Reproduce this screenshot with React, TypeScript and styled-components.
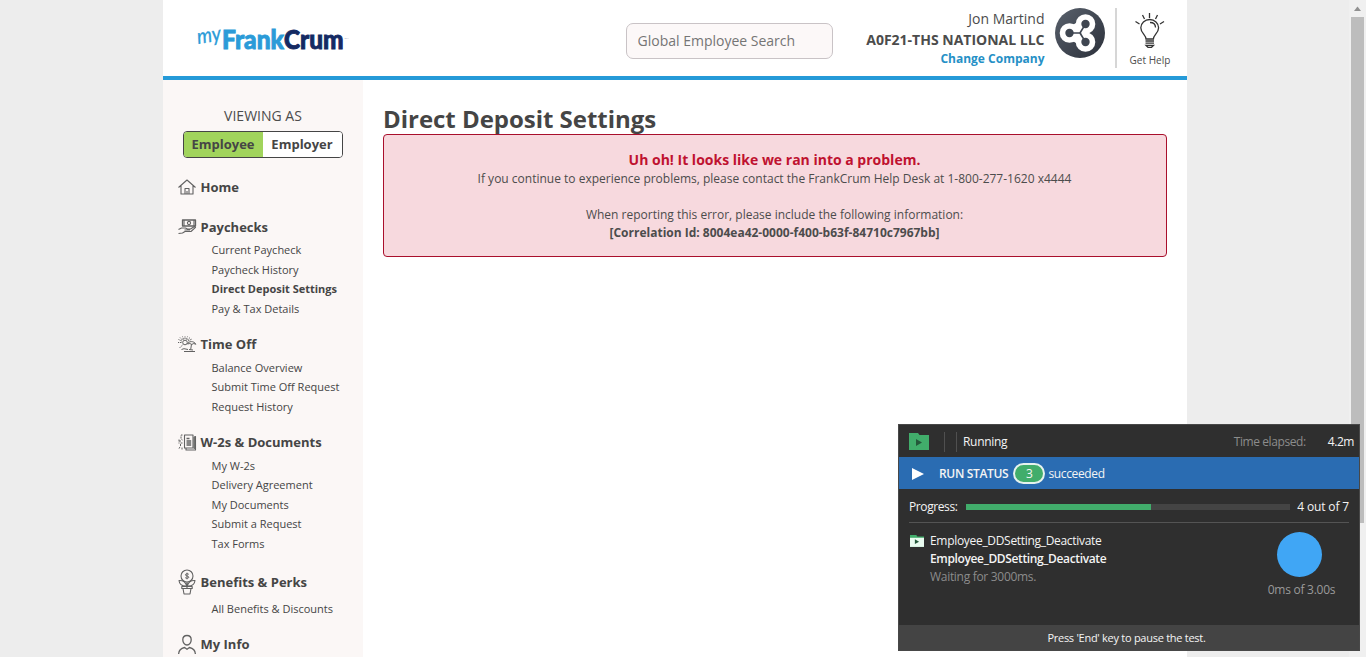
import React from "react";
import styled, { createGlobalStyle } from "styled-components";

const GlobalStyle = createGlobalStyle`
  *, *::before, *::after { box-sizing: border-box; }
  html, body { margin: 0; height: 657px; overflow: hidden; }
  body {
    background: #ededed;
    color: #4c4c4c;
    font-family: "Open Sans", "Noto Sans", sans-serif;
    font-size: 12px;
  }
`;

const Screen = styled.div`
  position: relative;
  display: flex;
  justify-content: space-between;
  width: 1366px;
  height: 657px;
  overflow: hidden;
  padding-left: 163px;
`;

const Page = styled.div`
  display: flex;
  flex-direction: column;
  width: 1024px;
  height: 657px;
  background: #fff;
`;

const Header = styled.header`
  display: flex;
  align-items: flex-start;
  flex: none;
  height: 80px;
  padding-left: 35px;
  border-bottom: 4px solid #259ad8;
`;

const Logo = styled.svg`
  flex: none;
  width: 152px;
  height: 40px;
  margin-top: 20px;
  overflow: visible;
`;

const Search = styled.input`
  flex: none;
  width: 207px;
  height: 36px;
  margin: 23px 0 0 276px;
  padding: 0 10px 2px 10.5px;
  border: 1px solid #c9c3c6;
  border-radius: 7px;
  background: #fcf8f8;
  color: #757575;
  font: 14px "Open Sans", sans-serif;
  outline: none;
  &::placeholder { color: #757575; opacity: 1; }
`;

const User = styled.div`
  display: flex;
  flex-direction: column;
  align-items: flex-end;
  flex: none;
  width: 211.5px;
  padding-top: 9px;
`;

const Line = styled.span<{ $size?: number; $height?: number; $weight?: number; $color?: string; $track?: number }>`
  font-size: ${(p) => p.$size ?? 12}px;
  line-height: ${(p) => p.$height ?? 18}px;
  font-weight: ${(p) => p.$weight ?? 400};
  color: ${(p) => p.$color ?? "inherit"};
  letter-spacing: ${(p) => p.$track ?? 0}px;
  white-space: pre;
`;

const Avatar = styled.svg`
  flex: none;
  width: 50px;
  height: 50px;
  margin: 8px 10px 0 10.5px;
`;

const Help = styled.div`
  display: flex;
  flex-direction: column;
  align-items: center;
  width: 68px;
  height: 60px;
  margin-top: 8px;
  border-left: 2px solid #d6d6d6;
`;

const Bulb = styled.svg`
  width: 34px;
  height: 38px;
  margin: 3px 0 3px;
`;

const Body = styled.div`
  display: flex;
  flex: 1;
`;

const Sidebar = styled.nav`
  width: 200px;
  height: 577px;
  overflow: hidden;
  background: #fbf7f6;
`;

const ViewingAs = styled.div`
  display: flex;
  flex-direction: column;
  align-items: center;
  height: 97px;
  padding-top: 26px;
`;

const Toggle = styled.div`
  display: flex;
  width: 160px;
  height: 27px;
  margin-top: 6px;
  border: 1px solid #454545;
  border-radius: 4px;
  overflow: hidden;
`;

const Choice = styled.button<{ $on?: boolean }>`
  flex: 1;
  padding: 0 1px 0 0;
  border: 0;
  background: ${(p) => (p.$on ? "#a1d45c" : "#fff")};
  color: #454545;
  font: 700 13px/25px "Open Sans", sans-serif;
`;

const Group = styled.section<{ $gap?: number }>`
  margin-bottom: ${(p) => p.$gap ?? 15.5}px;
`;

const GroupHead = styled.div<{ $tall?: boolean }>`
  display: flex;
  align-items: center;
  gap: 4.5px;
  height: ${(p) => (p.$tall ? 26 : 20)}px;
  padding-left: 15px;
  color: #454545;
  font-size: 13px;
  font-weight: 700;
  white-space: nowrap;
`;

const NavIcon = styled.svg`
  flex: none;
  width: 18px;
  height: 26px;
  overflow: visible;
  fill: none;
  stroke: #626262;
  stroke-width: 1.1;
  stroke-linejoin: round;
`;

const Items = styled.ul`
  margin: 3.5px 0 0;
  padding: 0 0 0.5px 48.5px;
  list-style: none;
`;

const Item = styled.li<{ $active?: boolean }>`
  height: 19.5px;
  color: #454545;
  font-size: 11px;
  line-height: 19px;
  font-weight: ${(p) => (p.$active ? 700 : 400)};
  white-space: nowrap;
`;

const Main = styled.main`
  flex: 1;
  padding: 24px 20px 0;
`;

const Title = styled.h1`
  margin: 0;
  height: 30px;
  color: #454545;
  font-size: 24px;
  line-height: 30px;
  font-weight: 700;
  letter-spacing: -0.03px;
`;

const Alert = styled.div`
  display: flex;
  flex-direction: column;
  align-items: center;
  height: 123px;
  padding: 15px 1px 0 0;
  border: 1px solid #a90f2c;
  border-radius: 4px;
  background: #f7d9de;
`;

const ScrollTrack = styled.div`
  display: flex;
  flex-direction: column;
  align-items: center;
  width: 17px;
  height: 657px;
  background: #f0f0f0;
`;

const ScrollArrow = styled.svg`
  width: 9px;
  height: 17px;
`;

const ScrollThumb = styled.div`
  width: 13px;
  height: 506px;
  background: #bdbdbd;
`;

const Runner = styled.aside`
  position: absolute;
  left: 898px;
  top: 424px;
  display: flex;
  flex-direction: column;
  width: 462px;
  height: 227px;
  border: 1px solid #484848;
  background: #2f2f2f;
  color: #f4f4f4;
`;

const RunnerBar = styled.div`
  display: flex;
  align-items: center;
  flex: none;
  height: 32px;
  padding: 1px 5px 0 10px;
`;

const Ticks = styled.div`
  width: 13px;
  height: 20px;
  margin: 0 6px 0 15px;
  border: solid #505050;
  border-width: 0 1px;
`;

const Elapsed = styled.div`
  display: flex;
  gap: 22px;
  margin-left: auto;
`;

const StatusBar = styled(RunnerBar)`
  padding-left: 13px;
  background: #2a6cb2;
`;

const PlayMark = styled.svg`
  width: 12px;
  height: 12px;
  margin-right: 15px;
`;

const Count = styled.span`
  display: flex;
  align-items: center;
  justify-content: center;
  width: 32px;
  height: 21px;
  margin: -1px 3px 0 5px;
  padding-top: 1px;
  border: 2px solid #e6f2ee;
  border-radius: 11px;
  background: #41ad6b;
`;

const ProgressRow = styled.div`
  display: flex;
  align-items: center;
  justify-content: space-between;
  height: 34px;
  margin: 0 10px;
  padding-top: 2px;
  border-bottom: 1px solid #545454;
`;

const Meter = styled.div`
  width: 324px;
  height: 6px;
  margin: 0 7px 0 8px;
  background: #444;
`;

const MeterFill = styled.div`
  width: 57.1%;
  height: 100%;
  background: #41ad6b;
`;

const RunnerBody = styled.div`
  display: flex;
  flex: 1;
  padding: 9px 23.500px 0 11px;
`;

const StepMark = styled.div`
  padding-top: 2px;
`;

const Steps = styled.div`
  display: flex;
  flex-direction: column;
  margin-left: 6px;
`;

const Timer = styled.div`
  display: flex;
  flex-direction: column;
  align-items: center;
  width: 68px;
  margin-left: auto;
`;

const Disc = styled.div`
  width: 45px;
  height: 45px;
  margin: 0 5px 4px 0;
  border-radius: 50%;
  background: #40a6f5;
`;

const RunnerFoot = styled.div`
  display: flex;
  align-items: center;
  justify-content: center;
  flex: none;
  height: 25px;
  padding-right: 5px;
  background: #444;
`;

const HomeIcon = () => (
  <NavIcon viewBox="0 0 18 26">
    <path d="M.5 13.500 9 6l8.500 7.500M3 11.500V20h12v-8.500M7 20v-5.500h4V20M9 17v3" />
  </NavIcon>
);

const PayIcon = () => (
  <NavIcon viewBox="0 0 18 26">
    <rect x="4.500" y="6" width="13" height="6" strokeWidth="1.300" />
    <circle cx="11" cy="9" r="1.600" />
    <path d="M6 6v6M16 6v6M.5 15.500l3-1.500h4l2 1h3l4-2.500 1 .8-4.500 4.200H7L4.500 19l-4 .5M6.500 16H12" />
  </NavIcon>
);

const BeachIcon = () => (
  <NavIcon viewBox="0 0 18 26">
    <circle cx="7" cy="11.500" r="2.300" strokeWidth="1" />
    <path
      strokeWidth="1"
      strokeDasharray="1.600 .8"
      d="M7 8V5M4.500 9 2 6.500M9.500 9 12 6.500M3.500 11.500H0M4.500 14 1.500 17M10 10l4-2M3.800 10 .5 8.500M5.500 8.500 4.500 5.500M8.500 8.500l1-3"
    />
    <path strokeWidth="1" d="M9.500 13c1-3 6.500-3.500 8.300.3l-2-.8-2 .9-2-.9zM13.500 13.200l-.8 5.300M3.500 18.500l2.500-.8 4 .8M6 20.500h11M11 18.500l4 .5" />
  </NavIcon>
);

const DocIcon = () => (
  <NavIcon viewBox="0 0 18 26">
    <path d="M6.500 6h8.500v13H6.500zM16.300 7.500h1.200V21H8v-1.500M16.300 8v12" />
    <path strokeWidth="1.300" d="M8.500 9.500h3M8.500 12h4.700M8.500 14h4.700M8.500 16h4.700" />
    <path strokeWidth="1" strokeDasharray="2 1" d="M4.500 6H3v4l1.500 1M3 12H.8M4.500 14H2.500v3L.8 20M4 18.500v2M1 10.500v4" />
  </NavIcon>
);

const PlantIcon = () => (
  <NavIcon viewBox="0 0 18 26">
    <circle cx="9" cy="7" r="6" />
    <path
      strokeWidth="1"
      d="M10.800 5.300C9.800 4.400 7.400 4.600 7.400 5.900c0 1.400 3.400.8 3.400 2.300 0 1.300-2.400 1.400-3.600.5M9 3.700v6.600"
    />
    <path d="M1 11.500c3-.2 6.500 1 7.800 5.500-4 .3-7.300-1-7.800-5.500zM17 11.500c-3-.2-6.500 1-7.800 5.500 4 .3 7.300-1 7.800-5.500zM9 13v6M3.800 17.500h10.400v2H3.800zM5 19.500l1 5.500h6l1-5.500" />
  </NavIcon>
);

const PersonIcon = () => (
  <NavIcon viewBox="0 0 18 26">
    <path
      strokeWidth="1.300"
      d="M9 4.500c2.700 0 4.200 1.700 4.200 4.300S11.500 14 9 14s-4.200-2.600-4.200-5.200S6.300 4.500 9 4.500zM.6 23c.2-4 2-5.700 6-6.500L9 18.300l2.400-1.800c4 .8 5.800 2.500 6 6.500"
    />
  </NavIcon>
);

const FolderIcon = ({ width, body, mark }: { width: number; body: string; mark: string }) => (
  <svg width={width} height={width * 0.85} viewBox="0 0 20 17">
    <path fill="#41ad6b" d="M0 0h9l1.500 2H20v15H0z" />
    <path fill={body} d="M0 4h20v13H0z" />
    <path fill={mark} d="m7 6 6 3.500L7 13z" />
  </svg>
);

interface NavGroup {
  name: string;
  icon: React.ReactNode;
  items: string[];
  gap?: number;
  tall?: boolean;
}

const groups: NavGroup[] = [
  { name: "Home", icon: <HomeIcon />, gap: 19.5, items: [] },
  {
    name: "Paychecks",
    icon: <PayIcon />,
    items: ["Current Paycheck", "Paycheck History", "Direct Deposit Settings", "Pay & Tax Details"],
  },
  { name: "Time Off", icon: <BeachIcon />, items: ["Balance Overview", "Submit Time Off Request", "Request History"] },
  {
    name: "W-2s & Documents",
    icon: <DocIcon />,
    items: ["My W-2s", "Delivery Agreement", "My Documents", "Submit a Request", "Tax Forms"],
  },
  { name: "Benefits & Perks", icon: <PlantIcon />, tall: true, items: ["All Benefits & Discounts"] },
  { name: "My Info", icon: <PersonIcon />, items: [] },
];

export default function App() {
  return (
    <Screen>
      <GlobalStyle />
      <Page>
        <Header>
          <Logo viewBox="0 0 152 40">
            <text
              x="0" y="24" fill="#2b9bd8" stroke="#2b9bd8" strokeWidth=".3" fontFamily="Lato" fontStyle="italic" fontSize="21"
              textLength="24" lengthAdjust="spacingAndGlyphs" transform="rotate(-9 0 24)"
            >my</text>
            <g fontFamily="Lato" fontWeight="900" fontSize="26" strokeWidth=".9">
              <text x="24" y="28.800" fill="#2b9bd8" stroke="#2b9bd8" textLength="62" lengthAdjust="spacingAndGlyphs">Frank</text>
              <text x="86" y="28.800" fill="#142a63" stroke="#142a63" textLength="59.500" lengthAdjust="spacingAndGlyphs">Crum</text>
            </g>
            <text x="146.500" y="19" fill="#8a93b0" fontFamily="Lato" fontSize="2.500">TM</text>
          </Logo>
          <Search placeholder="Global Employee Search" />
          <User>
            <Line $size={14} $height={20}>Jon Martind</Line>
            <Line $size={14} $height={21} $weight={700}>A0F21-THS NATIONAL LLC</Line>
            <Line $height={18} $weight={700} $color="#2590c6">Change Company</Line>
          </User>
          <Avatar viewBox="0 0 50 50">
            <defs>
              <linearGradient id="disc" x1="0" y1="0" x2="1" y2="1">
                <stop offset="0" stopColor="#59616c" />
                <stop offset="1" stopColor="#2b303a" />
              </linearGradient>
            </defs>
            <circle cx="25" cy="25" r="25" fill="url(#disc)" />
            <g fill="#fff">
              <circle cx="14.500" cy="25" r="9.800" />
              <circle cx="30.500" cy="16" r="9.800" />
              <circle cx="30.500" cy="34" r="9.800" />
              <path d="M16 18 26 12v26l-10-6z" />
            </g>
            <g fill="#3f4651" stroke="#3f4651" strokeWidth="1.600">
              <path fill="none" d="M14.500 25h10.500l5.500-9M25 25l5.500 9" />
              <circle cx="14.500" cy="25" r="3.400" />
              <circle cx="30.500" cy="16" r="3.400" />
              <circle cx="30.500" cy="34" r="3.400" />
            </g>
          </Avatar>
          <Help>
            <Bulb viewBox="0 0 34 38" fill="none" stroke="#333" strokeWidth="1.300">
              <path d="M16.500 2v5M9.500 4l2 4M24.500 4l-2 4M2.500 10.500 6.500 13M31 10.500 27 13" />
              <path d="M13 28c0-4-5.200-6-5.200-11.200a8.900 8.300 0 0 1 17.800 0c0 5.200-5.200 7.200-5.200 11.200zM17 11.500c3.500 0 5.500 2 5.500 5M12.500 30h8.500M12.500 32.200h8.500M13 34.300h7.500l-2 2h-3.500z" />
            </Bulb>
            <Line $size={10} $height={16} $track={0.05}>Get Help</Line>
          </Help>
        </Header>
        <Body>
          <Sidebar>
            <ViewingAs>
              <Line $size={14} $height={19}>VIEWING AS</Line>
              <Toggle>
                <Choice $on>Employee</Choice>
                <Choice>Employer</Choice>
              </Toggle>
            </ViewingAs>
            {groups.map((g) => (
              <Group key={g.name} $gap={g.gap}>
                <GroupHead $tall={g.tall}>
                  {g.icon}
                  {g.name}
                </GroupHead>
                {g.items.length > 0 && (
                  <Items>
                    {g.items.map((name) => (
                      <Item key={name} $active={name === "Direct Deposit Settings"}>{name}</Item>
                    ))}
                  </Items>
                )}
              </Group>
            ))}
          </Sidebar>
          <Main>
            <Title>Direct Deposit Settings</Title>
            <Alert>
              <Line $size={14} $height={20} $weight={700} $color="#bf1230">Uh oh! It looks like we ran into a problem.</Line>
              <Line>If you continue to experience problems, please contact the FrankCrum Help Desk at 1-800-277-1620 x4444</Line>
              <Line> </Line>
              <Line>When reporting this error, please include the following information:</Line>
              <Line $weight={700}>[Correlation Id: 8004ea42-0000-f400-b63f-84710c7967bb]</Line>
            </Alert>
          </Main>
        </Body>
      </Page>
      <ScrollTrack>
        <ScrollArrow viewBox="0 0 9 17"><path fill="#909090" d="M4.500 6.500 8 11H1z" /></ScrollArrow>
        <ScrollThumb />
      </ScrollTrack>
      <Runner>
        <RunnerBar>
          <FolderIcon width={20} body="#41ad6b" mark="#24583a" />
          <Ticks />
          <Line $track={-0.3}>Running</Line>
          <Elapsed>
            <Line $color="#8c8c8c" $track={-0.4}>Time elapsed:</Line>
            <Line $track={-0.45}>4.2m</Line>
          </Elapsed>
        </RunnerBar>
        <StatusBar>
          <PlayMark viewBox="0 0 12 12"><path fill="#fff" d="m0 0 12 6L0 12z" /></PlayMark>
          <Line $track={-0.33} $weight={600}>RUN STATUS</Line>
          <Count><Line $height={17}>3</Line></Count>
          <Line $track={-0.35}>succeeded</Line>
        </StatusBar>
        <ProgressRow>
          <Line $track={-0.4}>Progress:</Line>
          <Meter><MeterFill /></Meter>
          <Line $track={-0.15}>4 out of 7</Line>
        </ProgressRow>
        <RunnerBody>
          <StepMark>
            <FolderIcon width={14} body="#e9fbf0" mark="#24583a" />
          </StepMark>
          <Steps>
            <Line $track={-0.31}>Employee_DDSetting_Deactivate</Line>
            <Line $weight={600} $track={-0.36}>Employee_DDSetting_Deactivate</Line>
            <Line $color="#8c8c8c" $track={-0.3}>Waiting for 3000ms.</Line>
          </Steps>
          <Timer>
            <Disc />
            <Line $color="#9a9a9a" $track={-0.25}>0ms of 3.00s</Line>
          </Timer>
        </RunnerBody>
        <RunnerFoot>
          <Line $size={11} $track={-0.27}>Press 'End' key to pause the test.</Line>
        </RunnerFoot>
      </Runner>
    </Screen>
  );
}
